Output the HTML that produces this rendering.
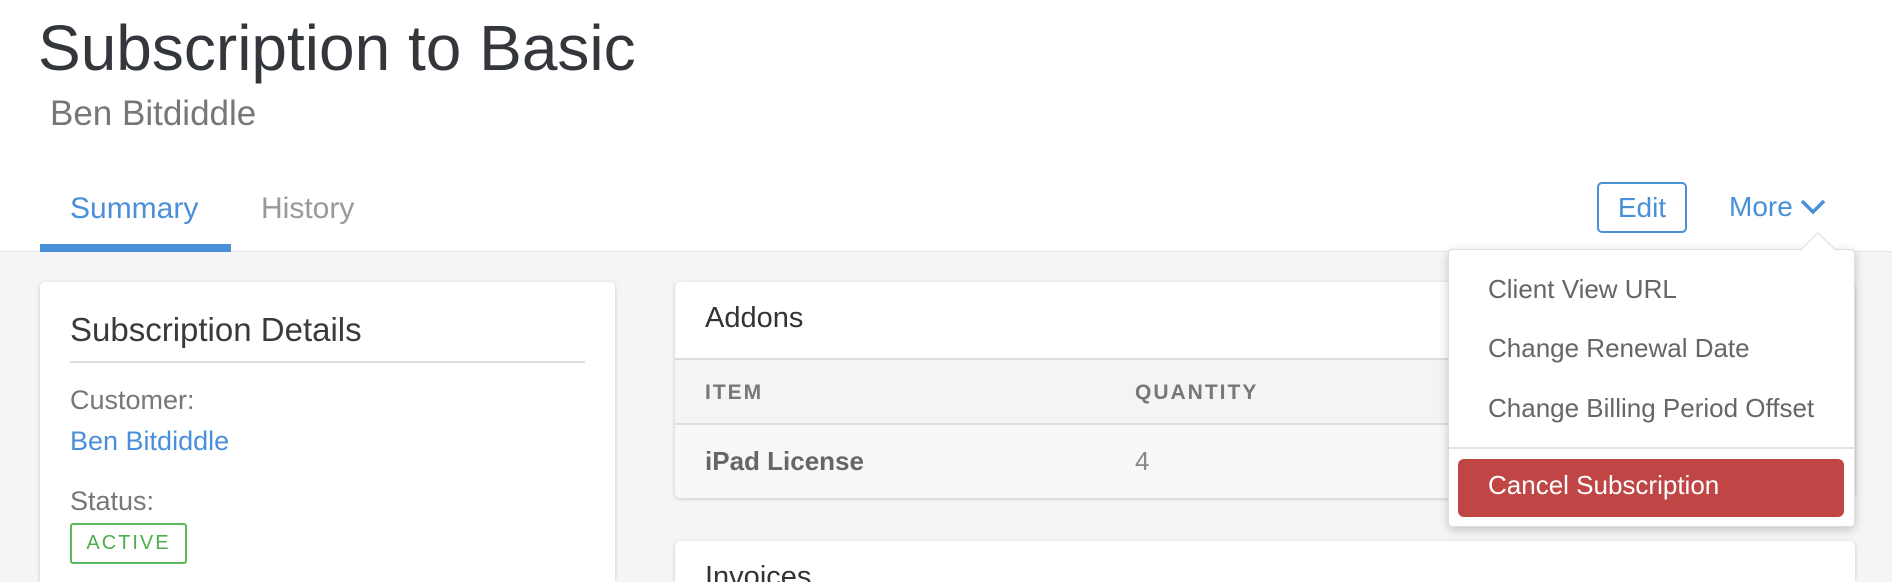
<!DOCTYPE html>
<html><head><meta charset="utf-8"><style>
*{margin:0;padding:0;box-sizing:border-box}
html{width:1892px;height:582px;overflow:hidden}
body{width:1892px;height:582px;overflow:hidden;background:#f4f5f7;font-family:"Liberation Sans",sans-serif;position:relative}
.a{position:absolute;line-height:1;white-space:nowrap}
.card{position:absolute;background:#fff;border-radius:5px;box-shadow:0 1px 4px rgba(0,0,0,.18)}
</style></head><body>
<div class="a" style="left:0;top:0;width:1892px;height:252px;background:#fff;border-bottom:1px solid #e3e4e6"></div>
<div class="a" style="left:38px;top:16px;font-size:64px;color:#33363b">Subscription to Basic</div>
<div class="a" style="left:50px;top:96px;font-size:35px;color:#777">Ben Bitdiddle</div>
<div class="a" style="left:70px;top:194px;font-size:30px;color:#4a90d9">Summary</div>
<div class="a" style="left:261px;top:194px;font-size:30px;color:#999">History</div>
<div class="a" style="left:40px;top:244px;width:191px;height:8px;background:#4a90d9"></div>

<div class="card" style="left:40px;top:282px;width:575px;height:300px;border-radius:5px 5px 0 0"></div>
<div class="a" style="left:70px;top:313px;font-size:33px;color:#3a3a3a">Subscription Details</div>
<div class="a" style="left:70px;top:361px;width:515px;height:2px;background:#ddd"></div>
<div class="a" style="left:70px;top:387px;font-size:27px;color:#777">Customer:</div>
<div class="a" style="left:70px;top:428px;font-size:27px;color:#4a90d9">Ben Bitdiddle</div>
<div class="a" style="left:70px;top:488px;font-size:27px;color:#777">Status:</div>
<div class="a" style="left:70px;top:523px;width:117px;height:41px;border:2px solid #5cb85c;border-radius:3px;color:#4cae4c;font-size:20px;letter-spacing:2px;text-align:center;line-height:37px">ACTIVE</div>

<div class="card" style="left:675px;top:282px;width:1180px;height:216px;overflow:hidden">
 <div class="a" style="left:0;top:76px;width:1180px;height:67px;background:#f4f4f4;border-top:2px solid #ddd;border-bottom:2px solid #ddd"></div>
 <div class="a" style="left:0;top:143px;width:1180px;height:73px;background:#f8f8f8"></div>
</div>
<div class="a" style="left:705px;top:304px;font-size:29px;color:#333">Addons</div>
<div class="a" style="left:705px;top:382px;font-size:21px;font-weight:bold;color:#777;letter-spacing:2px">ITEM</div>
<div class="a" style="left:1135px;top:382px;font-size:21px;font-weight:bold;color:#777;letter-spacing:2px">QUANTITY</div>
<div class="a" style="left:705px;top:448px;font-size:26px;font-weight:bold;color:#666">iPad License</div>
<div class="a" style="left:1135px;top:448px;font-size:26px;color:#888">4</div>

<div class="card" style="left:675px;top:541px;width:1180px;height:41px;overflow:hidden;border-radius:5px 5px 0 0">
 <div class="a" style="left:30px;top:22px;font-size:29px;color:#333">Invoices</div>
</div>

<div class="a" style="left:1597px;top:182px;width:90px;height:51px;border:2px solid #4a90d9;border-radius:5px;color:#4a90d9;font-size:28px;text-align:center;line-height:47px">Edit</div>
<div class="a" style="left:1729px;top:193px;font-size:28px;color:#4a90d9">More</div>
<svg class="a" style="left:1799px;top:198px" width="28" height="18" viewBox="0 0 28 18"><path d="M3 3 L14 14 L25 3" fill="none" stroke="#4a90d9" stroke-width="3.5"/></svg>

<div class="a" style="left:1448px;top:249px;width:407px;height:278px;background:#fff;border:1px solid #ddd;border-radius:4px;box-shadow:0 3px 10px rgba(0,0,0,.2)"></div>
<div class="a" style="left:1806px;top:237px;width:24px;height:24px;background:#fff;border-left:1px solid #ddd;border-top:1px solid #ddd;transform:rotate(45deg)"></div>
<div class="a" style="left:1488px;top:276px;font-size:26px;color:#666">Client View URL</div>
<div class="a" style="left:1488px;top:335px;font-size:26px;color:#666">Change Renewal Date</div>
<div class="a" style="left:1488px;top:395px;font-size:26px;color:#666">Change Billing Period Offset</div>
<div class="a" style="left:1449px;top:447px;width:405px;height:2px;background:#e3e3e3"></div>
<div class="a" style="left:1458px;top:459px;width:386px;height:58px;background:#c04545;border-radius:6px"></div>
<div class="a" style="left:1488px;top:472px;font-size:26px;color:#fff">Cancel Subscription</div>
</body></html>
